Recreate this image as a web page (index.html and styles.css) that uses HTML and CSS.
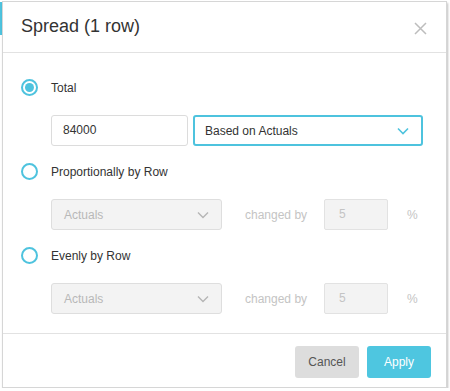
FILE: index.html
```html
<!DOCTYPE html>
<html lang="en">
<head>
  <meta charset="UTF-8" />
  <title>Spread</title>
  <link rel="stylesheet" href="styles.css">
</head>
<body>
  <div class="backdrop-tab"></div>

  <div class="modal">
    <div class="modal-header">
      <span class="modal-title">Spread (1 row)</span>
      <span class="modal-close">
        <svg width="13" height="13" viewBox="0 0 13 13"><path d="M1 1L12 12M12 1L1 12" stroke="#bdbdbd" stroke-width="1.5" fill="none"/></svg>
      </span>
    </div>

    <div class="modal-body">
      <div class="option">
        <span class="radio checked"></span>
        <span class="option-label">Total</span>
      </div>
      <div class="field-row">
        <div class="text-input">84000</div>
        <div class="select active">
          Based on Actuals
          <svg class="chev" width="12" height="8" viewBox="0 0 12 8"><path d="M1 1.5L6 6.5L11 1.5" stroke="#4ec3de" stroke-width="1.6" fill="none"/></svg>
        </div>
      </div>

      <div class="option">
        <span class="radio"></span>
        <span class="option-label">Proportionally by Row</span>
      </div>
      <div class="field-row">
        <div class="select disabled">
          Actuals
          <svg class="chev" width="12" height="8" viewBox="0 0 12 8"><path d="M1 1.5L6 6.5L11 1.5" stroke="#b5b5b5" stroke-width="1.4" fill="none"/></svg>
        </div>
        <span class="muted changed">changed by</span>
        <div class="pct-input">5</div>
        <span class="muted pct">%</span>
      </div>

      <div class="option">
        <span class="radio"></span>
        <span class="option-label">Evenly by Row</span>
      </div>
      <div class="field-row">
        <div class="select disabled">
          Actuals
          <svg class="chev" width="12" height="8" viewBox="0 0 12 8"><path d="M1 1.5L6 6.5L11 1.5" stroke="#b5b5b5" stroke-width="1.4" fill="none"/></svg>
        </div>
        <span class="muted changed">changed by</span>
        <div class="pct-input">5</div>
        <span class="muted pct">%</span>
      </div>
    </div>

    <div class="modal-footer">
      <button class="btn btn-cancel">Cancel</button>
      <button class="btn btn-apply">Apply</button>
    </div>
  </div>
</body>
</html>
```

FILE: styles.css
```css
body {
  margin: 0;
  background-color: #ffffff;
  font-family: "Liberation Sans", Arial, sans-serif;
  color: #333;
  position: relative;
}
.backdrop-tab {
  position: absolute;
  left: 0;
  top: 2px;
  width: 3px;
  height: 33px;
  background-color: #4ec3de;
}
.modal {
  position: relative;
  margin: 1px 2px 0 2px;
  width: 443px;
  height: 385px;
  border: 1px solid #d6d6d6;
  background-color: #fff;
  box-shadow: 1px 2px 2px rgba(0, 0, 0, 0.25);
}
.modal-header {
  height: 50px;
  border-bottom: 1px solid #e2e2e2;
  display: flex;
  align-items: center;
  justify-content: space-between;
  padding: 0 19px 0 18px;
}
.modal-title {
  font-size: 18px;
  color: #333;
  margin-top: -2px;
}
.modal-close {
  display: flex;
  margin-top: 2px;
}
.modal-body {
  padding: 26px 0 19px 18px;
  border-bottom: 1px solid #e2e2e2;
}
.option {
  display: flex;
  align-items: center;
  height: 17px;
}
.option + .field-row {
  margin-top: 19px;
}
.field-row + .option {
  margin-top: 17px;
}
.radio {
  width: 13px;
  height: 13px;
  border: 2px solid #4ec3de;
  border-radius: 50%;
  box-sizing: content-box;
  position: relative;
}
.radio.checked::after {
  content: "";
  position: absolute;
  left: 2px;
  top: 2px;
  width: 9px;
  height: 9px;
  border-radius: 50%;
  background-color: #4ec3de;
}
.option-label {
  font-size: 12px;
  color: #333;
  margin-left: 13px;
}
.field-row {
  display: flex;
  align-items: center;
  padding-left: 30px;
}
.text-input {
  width: 124px;
  height: 29px;
  border: 1px solid #dcdcdc;
  border-radius: 3px;
  font-size: 12px;
  line-height: 29px;
  padding-left: 11px;
}
.select {
  position: relative;
  font-size: 12px;
  border-radius: 3px;
  display: flex;
  align-items: center;
  justify-content: space-between;
  box-sizing: border-box;
}
.select.active {
  margin-left: 5px;
  width: 230px;
  height: 31px;
  border: 2px solid #4ec3de;
  padding: 0 12px 0 10px;
  color: #333;
}
.select.disabled {
  width: 171px;
  height: 31px;
  border: 1px solid #dedede;
  background-color: #f3f3f3;
  color: #b8b8b8;
  padding: 0 12px 0 12px;
}
.muted {
  font-size: 12px;
  color: #c4c4c4;
}
.changed {
  margin-left: 23px;
}
.pct-input {
  margin-left: 17px;
  width: 64px;
  height: 31px;
  box-sizing: border-box;
  border: 1px solid #e2e2e2;
  background-color: #f3f3f3;
  border-radius: 2px;
  font-size: 12px;
  color: #c4c4c4;
  line-height: 29px;
  padding-left: 14px;
}
.pct {
  margin-left: 19px;
}
.modal-footer {
  display: flex;
  justify-content: flex-end;
  gap: 8px;
  padding: 12px 15px 0 0;
}
.btn {
  height: 32px;
  border: none;
  border-radius: 3px;
  font-family: "Liberation Sans", Arial, sans-serif;
  font-size: 12px;
  cursor: pointer;
}
.btn-cancel {
  width: 64px;
  background-color: #dddddd;
  color: #555;
}
.btn-apply {
  width: 64px;
  background-color: #4ec6e0;
  color: #fff;
}
```
